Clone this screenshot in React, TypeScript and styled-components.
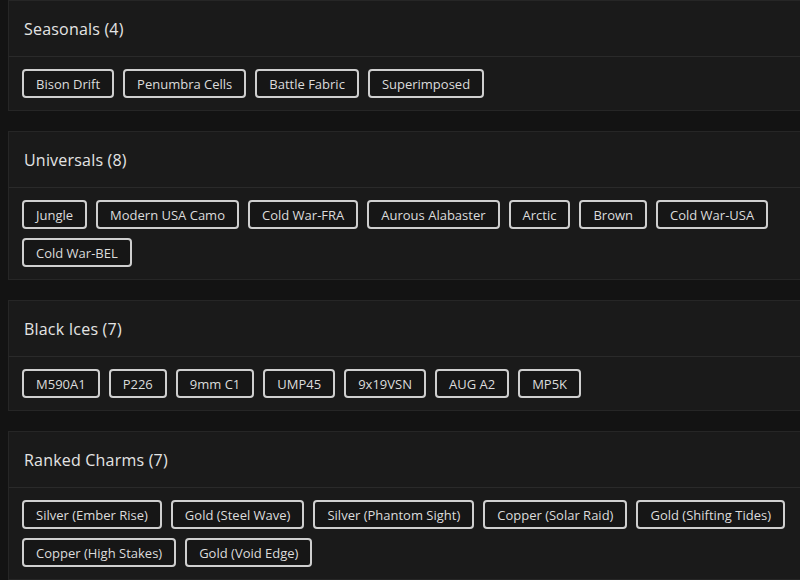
import React from 'react';
import styled, { createGlobalStyle } from 'styled-components';

const GlobalStyle = createGlobalStyle`
  html, body {
    margin: 0;
    padding: 0;
    background-color: #131313;
    font-family: 'Open Sans', 'Liberation Sans', sans-serif;
  }
`;

const Page = styled.main`
  display: flex;
  flex-direction: column;
  gap: 20px;
  padding: 0 0 20px 8px;
  overflow: hidden;
`;

const Card = styled.section`
  margin-right: -12px;
  background-color: #1a1a1a;
  border: 1px solid #262626;
`;

const Header = styled.header`
  display: flex;
  align-items: center;
  height: 55px;
  padding: 0 15px;
  border-bottom: 1px solid #2a2a2a;
`;

const Title = styled.h2`
  margin: 0;
  font-size: 16px;
  font-weight: 500;
  color: #e4e4e4;
  letter-spacing: 0.2px;
`;

const Body = styled.div`
  display: flex;
  flex-wrap: wrap;
  gap: 9px;
  padding: 12px 13px;
`;

const Chip = styled.button`
  height: 29px;
  padding: 0 12px;
  background-color: #161616;
  border: 2px solid #cfcfcf;
  border-radius: 4px;
  color: #dcdcdc;
  font-family: inherit;
  font-size: 13px;
  cursor: pointer;
`;

const groups = [
  { title: 'Seasonals', items: ['Bison Drift', 'Penumbra Cells', 'Battle Fabric', 'Superimposed'] },
  {
    title: 'Universals',
    items: ['Jungle', 'Modern USA Camo', 'Cold War-FRA', 'Aurous Alabaster', 'Arctic', 'Brown', 'Cold War-USA', 'Cold War-BEL'],
  },
  { title: 'Black Ices', items: ['M590A1', 'P226', '9mm C1', 'UMP45', '9x19VSN', 'AUG A2', 'MP5K'] },
  {
    title: 'Ranked Charms',
    items: [
      'Silver (Ember Rise)',
      'Gold (Steel Wave)',
      'Silver (Phantom Sight)',
      'Copper (Solar Raid)',
      'Gold (Shifting Tides)',
      'Copper (High Stakes)',
      'Gold (Void Edge)',
    ],
  },
];

const App = () => {
  return (
    <>
      <GlobalStyle />
      <Page>
        {groups.map((group) => (
          <Card key={group.title}>
            <Header>
              <Title>
                {group.title} ({group.items.length})
              </Title>
            </Header>
            <Body>
              {group.items.map((item) => (
                <Chip key={item}>{item}</Chip>
              ))}
            </Body>
          </Card>
        ))}
      </Page>
    </>
  );
};

export default App;
